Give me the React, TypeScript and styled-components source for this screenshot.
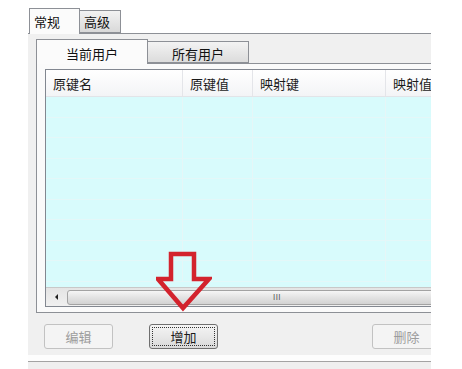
import styled, { createGlobalStyle } from 'styled-components';

const GlobalStyle = createGlobalStyle`
  html, body {
    margin: 0;
    padding: 0;
    background: #ffffff;
  }
  body {
    font-family: 'Noto Sans CJK SC', 'DejaVu Sans', sans-serif;
    font-size: 13px;
    color: #1e1e1e;
  }
`;

const columns = [
  { title: '原键名', width: 137 },
  { title: '原键值', width: 70 },
  { title: '映射键', width: 133 },
  { title: '映射值', width: 110 },
];

const ROW_COUNT = 9;

function DownArrow() {
  return (
    <Styled.Arrow width="56" height="62" viewBox="0 0 56 62">
      <polygon
        points="13,3 36,3 36,28 51,28 25,57 0,28 13,28"
        transform="translate(2,0)"
        fill="none"
        stroke="#d3232d"
        strokeWidth="4.5"
        strokeLinejoin="miter"
      />
    </Styled.Arrow>
  );
}

function App() {
  return (
    <Styled.Root>
      <GlobalStyle />
      <Styled.Clip>
        <Styled.TabStrip>
          <Styled.OuterTab $active>常规</Styled.OuterTab>
          <Styled.OuterTab>高级</Styled.OuterTab>
        </Styled.TabStrip>
        <Styled.OuterPanel>
          <Styled.InnerStrip>
            <Styled.InnerTab $active $width={112}>
              当前用户
            </Styled.InnerTab>
            <Styled.InnerTab $width={102}>所有用户</Styled.InnerTab>
          </Styled.InnerStrip>
          <Styled.InnerPanel>
            <Styled.List>
              <Styled.Header>
                {columns.map((col) => (
                  <Styled.HeaderCell key={col.title} $width={col.width}>
                    {col.title}
                  </Styled.HeaderCell>
                ))}
              </Styled.Header>
              <Styled.Body>
                {Array.from({ length: ROW_COUNT }).map((_, i) => (
                  <Styled.Row key={i}>
                    {columns.map((col) => (
                      <Styled.Cell key={col.title} $width={col.width} />
                    ))}
                  </Styled.Row>
                ))}
              </Styled.Body>
              <Styled.ScrollBar>
                <Styled.ScrollButton>
                  <Styled.LeftTriangle />
                </Styled.ScrollButton>
                <Styled.Thumb>
                  <Styled.Grip>III</Styled.Grip>
                </Styled.Thumb>
              </Styled.ScrollBar>
            </Styled.List>
          </Styled.InnerPanel>
          <Styled.ButtonRow>
            <Styled.Button disabled>编辑</Styled.Button>
            <Styled.Button $focused>
              <Styled.FocusRing>增加</Styled.FocusRing>
            </Styled.Button>
            <Styled.Button disabled $offset={118}>
              删除
            </Styled.Button>
          </Styled.ButtonRow>
        </Styled.OuterPanel>
        <Styled.Footer />
      </Styled.Clip>
      <DownArrow />
    </Styled.Root>
  );
}

export default App;

const Styled = {
  Root: styled.div`
    position: relative;
    width: 462px;
    height: 369px;
    padding-left: 28px;
    box-sizing: border-box;
    background: #ffffff;
    overflow: hidden;
  `,
  Clip: styled.div`
    width: 403px;
    height: 369px;
    overflow: hidden;
  `,
  TabStrip: styled.div`
    display: flex;
    align-items: flex-end;
    height: 33px;
    padding-top: 7px;
    padding-left: 1px;
    box-sizing: border-box;
  `,
  OuterTab: styled.div<{ $active?: boolean }>`
    position: relative;
    z-index: ${({ $active }) => ($active ? 2 : 1)};
    display: flex;
    align-items: center;
    height: ${({ $active }) => ($active ? '26px' : '23px')};
    margin-bottom: ${({ $active }) => ($active ? '-1px' : '0')};
    padding: 0 ${({ $active }) => ($active ? '19px' : '10px')} 0 ${({ $active }) => ($active ? '4px' : '4px')};
    box-sizing: border-box;
    border: 1px solid #8d9096;
    border-bottom: ${({ $active }) => ($active ? 'none' : '1px solid #8d9096')};
    margin-left: ${({ $active }) => ($active ? '0' : '-1px')};
    background: ${({ $active }) => ($active ? '#fbfbfb' : 'linear-gradient(#f2f2f2, #d9d9d9)')};
    font-size: 13px;
    line-height: 1;
    color: #111;
  `,
  OuterPanel: styled.div`
    height: 322px;
    padding: 5px 0 0 8px;
    box-sizing: border-box;
    border-top: 1px solid #8d9096;
    background: #f0f0f0;
  `,
  InnerStrip: styled.div`
    display: flex;
    align-items: flex-end;
    height: 24px;
  `,
  InnerTab: styled.div<{ $active?: boolean; $width: number }>`
    position: relative;
    z-index: ${({ $active }) => ($active ? 2 : 1)};
    display: flex;
    align-items: center;
    justify-content: center;
    width: ${({ $width }) => $width}px;
    height: ${({ $active }) => ($active ? '25px' : '22px')};
    margin-bottom: ${({ $active }) => ($active ? '-1px' : '0')};
    margin-left: ${({ $active }) => ($active ? '0' : '-1px')};
    box-sizing: border-box;
    border: 1px solid #8d9096;
    border-bottom: ${({ $active }) => ($active ? 'none' : '1px solid #8d9096')};
    background: ${({ $active }) => ($active ? '#fbfbfb' : 'linear-gradient(#f3f3f3, #dcdcdc)')};
    padding-top: 3px;
    font-size: 13px;
    line-height: 1;
    color: #111;
  `,
  InnerPanel: styled.div`
    height: 250px;
    padding: 5px 0 0 8px;
    box-sizing: border-box;
    border: 1px solid #8d9096;
    border-right: none;
    background: #fafafa;
  `,
  List: styled.div`
    width: 460px;
    height: 238px;
    box-sizing: border-box;
    border: 1px solid #828790;
    border-right: none;
    background: #ffffff;
    display: flex;
    flex-direction: column;
  `,
  Header: styled.div`
    display: flex;
    height: 26px;
    flex-shrink: 0;
    background: linear-gradient(#ffffff, #f3f4f6);
    border-bottom: 1px solid #e2e4e8;
  `,
  HeaderCell: styled.div<{ $width: number }>`
    display: flex;
    align-items: center;
    width: ${({ $width }) => $width}px;
    flex-shrink: 0;
    padding-left: 7px;
    padding-top: 1px;
    box-sizing: border-box;
    border-right: 1px solid #e4e5e9;
    font-size: 13px;
    line-height: 1;
    color: #1a1a1a;
  `,
  Body: styled.div`
    flex: 1;
    overflow: hidden;
    background: #d8fbfc;
  `,
  Row: styled.div`
    display: flex;
    height: 20.5px;
    box-sizing: border-box;
    border-bottom: 1px solid #e4f7f8;
  `,
  Cell: styled.div<{ $width: number }>`
    width: ${({ $width }) => $width}px;
    flex-shrink: 0;
    box-sizing: border-box;
    border-right: 1px solid #e6f6f7;
  `,
  ScrollBar: styled.div`
    display: flex;
    align-items: center;
    height: 19px;
    flex-shrink: 0;
    background: linear-gradient(#e4e4e4, #f0f0f0);
    border-top: 1px solid #c8c8c8;
    box-sizing: border-box;
  `,
  ScrollButton: styled.div`
    display: flex;
    align-items: center;
    justify-content: center;
    width: 20px;
    height: 100%;
  `,
  LeftTriangle: styled.div`
    width: 0;
    height: 0;
    border-top: 3px solid transparent;
    border-bottom: 3px solid transparent;
    border-right: 3px solid #202020;
  `,
  Thumb: styled.div`
    display: flex;
    align-items: center;
    justify-content: center;
    width: 420px;
    height: 15px;
    margin-left: 1px;
    box-sizing: border-box;
    border: 1px solid #a3a3a3;
    border-radius: 3px;
    background: linear-gradient(#f6f6f6, #e3e3e3 50%, #d3d3d3);
  `,
  Grip: styled.span`
    font-family: 'Liberation Sans', sans-serif;
    font-size: 8px;
    letter-spacing: 0.5px;
    color: #555;
    transform: scaleY(1.1);
  `,
  ButtonRow: styled.div`
    display: flex;
    gap: 36px;
    margin-top: 11px;
    padding-left: 8px;
  `,
  Button: styled.button<{ $focused?: boolean; $offset?: number }>`
    display: flex;
    align-items: center;
    justify-content: center;
    flex-shrink: 0;
    width: 69px;
    height: 25px;
    margin-left: ${({ $offset }) => ($offset ? `${$offset}px` : '0')};
    padding: 2px;
    box-sizing: border-box;
    border: 1px solid ${({ $focused }) => ($focused ? '#6f6f6f' : '#c2c2c2')};
    border-radius: 3px;
    background: ${({ $focused }) =>
      $focused ? 'linear-gradient(#f4f4f4, #e8e8e8 50%, #d9d9d9)' : '#f4f4f4'};
    font-family: 'Noto Sans CJK SC', sans-serif;
    font-size: 13px;
    line-height: 1;
    color: #1a1a1a;
    &:disabled {
      color: #9c9c9c;
    }
  `,
  FocusRing: styled.span`
    display: flex;
    align-items: center;
    justify-content: center;
    width: 100%;
    height: 100%;
    box-sizing: border-box;
    border: 1px dotted #333;
  `,
  Footer: styled.div`
    height: 14px;
    box-sizing: border-box;
    border-top: 6px solid #fdfdfd;
    box-shadow: inset 0 1px 0 #a3a3a3;
    background: #efefef;
  `,
  Arrow: styled.svg`
    position: absolute;
    left: 156px;
    top: 251px;
  `,
};
